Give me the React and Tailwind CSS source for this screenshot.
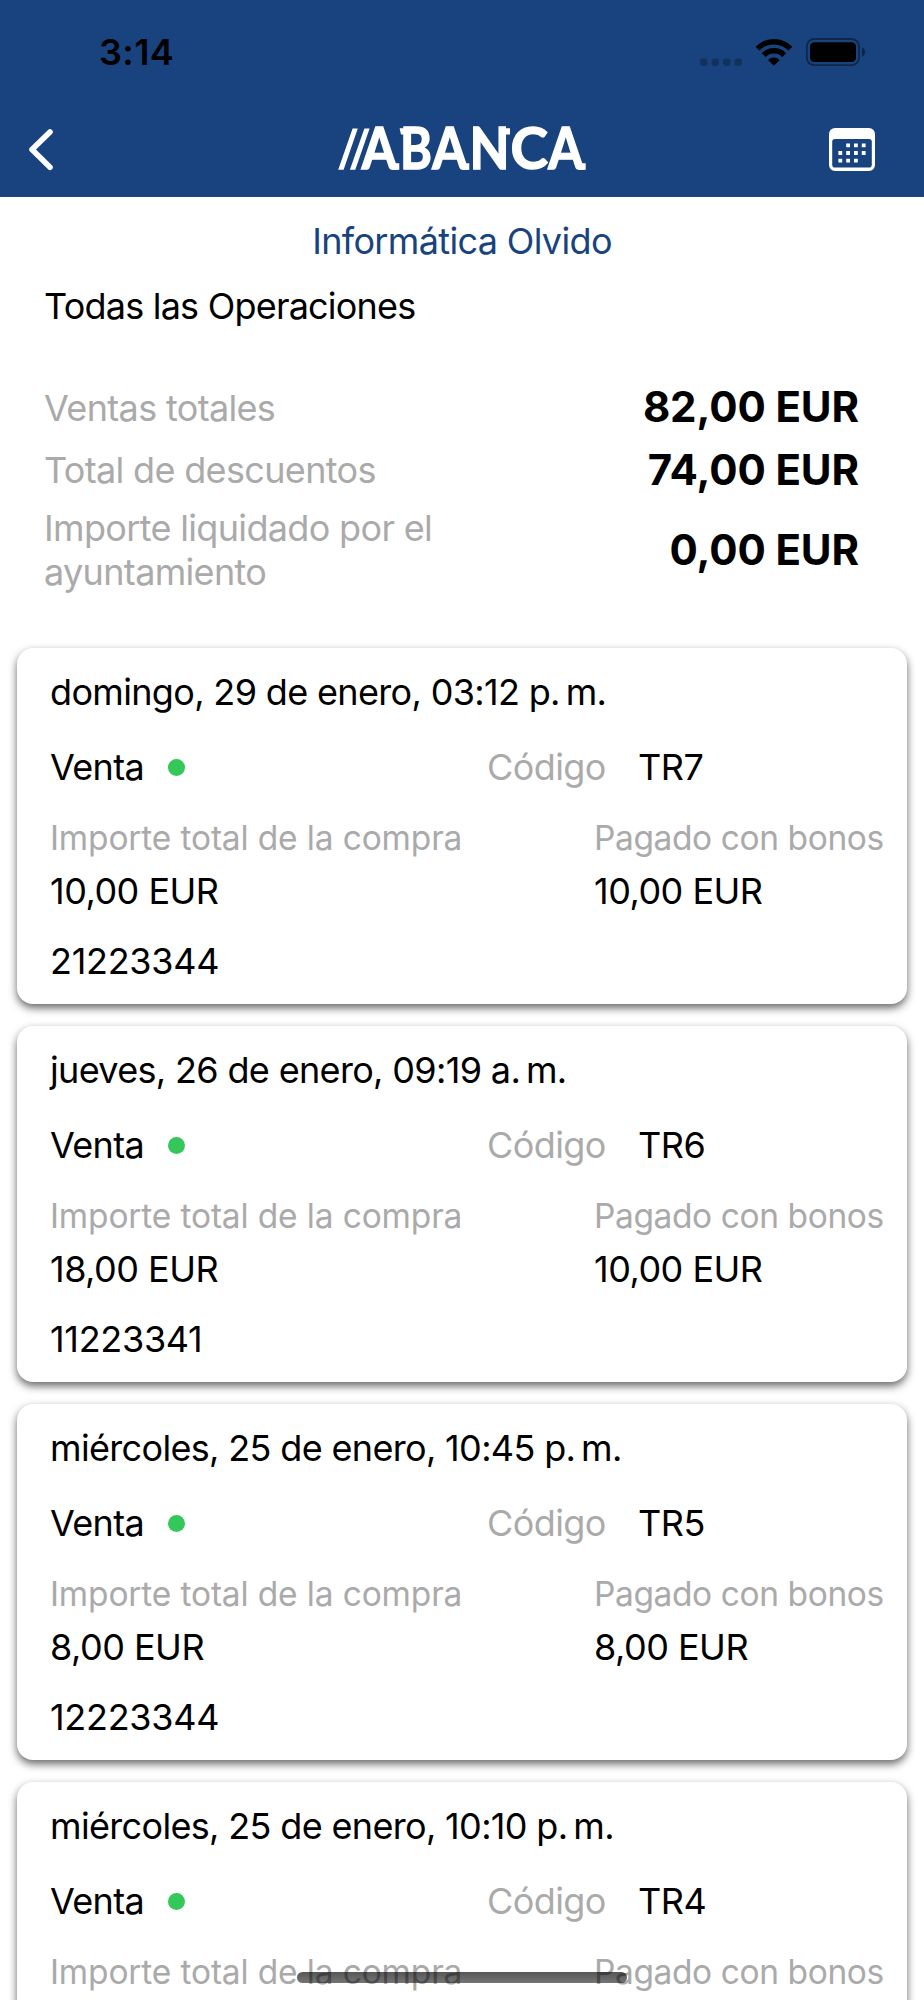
import React from 'react';

const operations = [
  { id: 1, date: 'domingo, 29 de enero, 03:12 p.\u2009m.', code: 'TR7', total: '10,00 EUR', paid: '10,00 EUR', reference: '21223344' },
  { id: 2, date: 'jueves, 26 de enero, 09:19 a.\u2009m.', code: 'TR6', total: '18,00 EUR', paid: '10,00 EUR', reference: '11223341' },
  { id: 3, date: 'miércoles, 25 de enero, 10:45 p.\u2009m.', code: 'TR5', total: '8,00 EUR', paid: '8,00 EUR', reference: '12223344' },
  { id: 4, date: 'miércoles, 25 de enero, 10:10 p.\u2009m.', code: 'TR4', total: '10,00 EUR', paid: '10,00 EUR', reference: '11223344' },
];

const StatusIcons = () => (
  <svg className="h-8 w-[166px]" viewBox="699 36 166 32" fill="none">
    <g fill="#000" fillOpacity="0.25">
      <rect x="700" y="58.5" width="7.4" height="7.4" rx="2.4" />
      <rect x="711.6" y="58.5" width="7.4" height="7.4" rx="2.4" />
      <rect x="723" y="58.5" width="7.4" height="7.4" rx="2.4" />
      <rect x="734.5" y="58.5" width="7.4" height="7.4" rx="2.4" />
    </g>
    {/* wifi */}
    <path d="M757.4 48.6a23.2 23.2 0 0 1 33 0" stroke="#000" strokeWidth="5.4" />
    <path d="M763.6 55.1a14.5 14.5 0 0 1 20.6 0" stroke="#000" strokeWidth="5.4" />
    <path d="M773.9 65.8l-5.8-5.8a8.2 8.2 0 0 1 11.6 0z" fill="#000" />
    {/* battery */}
    <rect x="806.8" y="39" width="52.2" height="26.2" rx="7.5" stroke="#000" strokeOpacity="0.42" strokeWidth="1.8" />
    <rect x="810" y="42.3" width="46" height="19.7" rx="4.4" fill="#000" />
    <path d="M862 47.6c4 1.8 4 7.4 0 9.2z" fill="#000" fillOpacity="0.45" />
  </svg>
);

const Logo = () => (
  <svg className="h-[92px] w-[254px]" viewBox="335 103 254 92" fill="#fff">
    <path d="M352.6 127.4h5.2L343.6 168.8h-5.4z" />
    <path d="M364.4 127.4h5.2L355.3 168.8h-5.4z" />
    <text y="168.1" fontSize="56.4" stroke="#fff" strokeWidth="1.5" className="font-[Lato] font-bold">
      <tspan x="361.8" textLength="35" lengthAdjust="spacingAndGlyphs">A</tspan>
      <tspan x="400" textLength="32" lengthAdjust="spacingAndGlyphs">B</tspan>
      <tspan x="432.2" textLength="35" lengthAdjust="spacingAndGlyphs">A</tspan>
      <tspan x="469.6" textLength="40" lengthAdjust="spacingAndGlyphs">N</tspan>
      <tspan x="510.4" textLength="37.5" lengthAdjust="spacingAndGlyphs">C</tspan>
      <tspan x="548.2" textLength="35" lengthAdjust="spacingAndGlyphs">A</tspan>
    </text>
    {/* small serifs */}
    <path d="M399.6 127.3h6v6.2h-4.6zM390 162.3h9.3v6.5h-7zM460 162.3h9.3v6.5h-7zM503 127.3h7v6.2h-7zM576.4 162.3h9.3v6.5h-7z" />
  </svg>
);

const Calendar = () => (
  <svg className="h-[43px] w-[46px]" viewBox="0 0 46 43" fill="#fff">
    <path fillRule="evenodd" d="M6 0h34a6 6 0 0 1 6 6v31a6 6 0 0 1-6 6H6a6 6 0 0 1-6-6V6a6 6 0 0 1 6-6zM6 11a2.8 2.8 0 0 0-2.8 2.8v23A2.8 2.8 0 0 0 6 39.6h34a2.8 2.8 0 0 0 2.8-2.8v-23A2.8 2.8 0 0 0 40 11z" />
    <path d="M17.2 15.4h3.8v3.8h-3.8zM25 15.4h3.8v3.8h-3.8zM32.8 15.4h3.8v3.8h-3.8zM9.4 23.1h3.8v3.8h-3.8zM17.2 23.1h3.8v3.8h-3.8zM25 23.1h3.8v3.8h-3.8zM32.8 23.1h3.8v3.8h-3.8zM9.4 30.8h3.8v3.8h-3.8zM17.2 30.8h3.8v3.8h-3.8zM25 30.8h3.8v3.8h-3.8z" />
  </svg>
);

const Header = () => (
  <header className="h-[197px] bg-[#18437e]">
    <div className="flex h-[104px] items-center justify-between pl-[99px] pr-[59px]">
      <span className="text-[36px] font-semibold leading-[40px] tracking-[0.4px] text-black">3:14</span>
      <StatusIcons />
    </div>
    <div className="flex h-[91px] items-center justify-between pl-[29px] pr-[49px]">
      <svg className="h-[42px] w-[66px]" viewBox="0 0 66 42" fill="none">
        <path d="M21 3L3 20.6l18 17.6" stroke="#fff" strokeWidth="5.6" strokeLinecap="round" strokeLinejoin="round" />
      </svg>
      <Logo />
      <Calendar />
    </div>
  </header>
);

const OperationCard = ({ operation }) => (
  <article className="h-[356px] shrink-0 rounded-[16px] bg-white pl-[33px] pt-6 text-[36px] leading-[40px] shadow-[0_4px_8px_rgba(0,0,0,0.6)]">
    <p className="tracking-[-0.66px]">{operation.date}</p>
    <div className="mt-[35px] flex items-center">
      <span className="w-[118px] tracking-[-0.7px]">Venta</span>
      <span className="h-[17px] w-[17px] rounded-full bg-[#34c759]" />
      <span className="ml-[302px] w-[151px] tracking-[-0.6px] text-[#aaaaaa]">Código</span>
      <span className="tracking-[-0.4px]">{operation.code}</span>
    </div>
    <div className="mt-[31px] flex text-[33.5px] tracking-[-0.15px] text-[#aaaaaa]">
      <span className="w-[544px]">Importe total de la compra</span>
      <span className="tracking-[-0.4px]">Pagado con bonos</span>
    </div>
    <div className="mt-[13px] flex tracking-[-0.5px]">
      <span className="w-[544px]">{operation.total}</span>
      <span>{operation.paid}</span>
    </div>
    <p className="mt-[30px] tracking-[-0.3px]">{operation.reference}</p>
  </article>
);

const App = () => {
  return (
    <div className="relative h-[2000px] w-[924px] overflow-hidden whitespace-nowrap bg-white font-[Inter,sans-serif] text-black">
      <Header />
      <h1 className="mt-[24px] text-center text-[36px] leading-[40px] tracking-[-0.65px] text-[#18437e]">Informática Olvido</h1>
      <h2 className="mt-[25px] pl-11 text-[36px] leading-[40px] tracking-[-0.78px]">Todas las Operaciones</h2>

      <section className="mt-[50px] pl-11 pr-[65px] text-[36px] tracking-[-0.66px] text-[#aaaaaa]">
        <div className="flex h-[63px] items-center justify-between">
          <span>Ventas totales</span>
          <span className="pb-[2px] text-[42px] font-bold tracking-[-0.1px] text-black">82,00 EUR</span>
        </div>
        <div className="flex h-[62px] items-center justify-between">
          <span>Total de descuentos</span>
          <span className="pb-[2px] text-[42px] font-bold tracking-[-0.1px] text-black">74,00 EUR</span>
        </div>
        <div className="flex h-[99px] items-center justify-between">
          <span className="leading-[43.5px]">Importe liquidado por el<br />ayuntamiento</span>
          <span className="pb-[2px] text-[42px] font-bold tracking-[-0.1px] text-black">0,00 EUR</span>
        </div>
      </section>

      <section className="mt-[48px] flex flex-col gap-[22px] px-[17px]">
        {operations.map((operation) => (
          <OperationCard key={operation.id} operation={operation} />
        ))}
      </section>

      {/* home indicator */}
      <div className="absolute left-[297px] top-[1972px] h-[10.5px] w-[330px] rounded-full bg-gradient-to-b from-black/66 to-black/54" />
    </div>
  );
};

export default App;
